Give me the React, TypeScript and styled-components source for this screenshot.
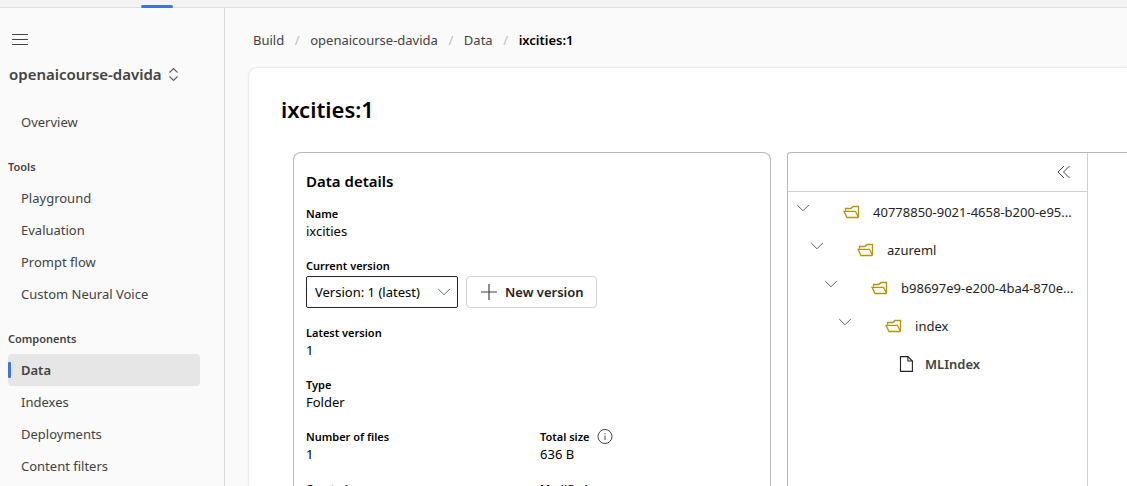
import React from "react";
import styled, { createGlobalStyle } from "styled-components";

const GlobalStyle = createGlobalStyle`
  *, *::before, *::after { box-sizing: border-box; }
  body {
    margin: 0;
    background: #fafafa;
    color: #000;
    font-family: "Noto Sans", "Open Sans", sans-serif;
    font-size: 13px;
    line-height: 20px;
  }
  h1, h2, h3, p, ul, ol, dl, dd { margin: 0; padding: 0; }
  ul, ol { list-style: none; }
  a { color: inherit; text-decoration: none; }
  button, select { font: inherit; color: inherit; }
  svg { display: block; flex: none; fill: none; }
`;

const Shell = styled.div`
  display: flex;
  flex-direction: column;
  height: 100vh;
  overflow: hidden;
`;

const TopBar = styled.header`
  flex: none;
  display: flex;
  align-items: flex-end;
  height: 8px;
  padding-left: 141px;
  background: #f3f3f3;
  border-bottom: 1px solid #e0e0e0;
`;

const TopTab = styled.span`
  width: 32px;
  height: 3px;
  margin-bottom: -1px;
  border-radius: 2px;
  background: #4273d9;
`;

const Body = styled.div`
  flex: 1;
  display: flex;
  min-height: 0;
`;

const Sidebar = styled.nav`
  flex: none;
  width: 225px;
  padding: 22px 24px 0 8px;
  border-right: 1px solid #d9d9d9;
  color: #424242;
  overflow: hidden;
`;

const PlainButton = styled.button`
  display: flex;
  align-items: center;
  padding: 0;
  border: 0;
  background: none;
`;

const MenuButton = styled(PlainButton)`
  height: 20px;
  padding-left: 4px;
`;

const ProjectButton = styled(PlainButton)`
  gap: 7px;
  height: 24px;
  margin: 12px 0 20px;
  padding-left: 1px;
  font-size: 15px;
  font-weight: 600;
`;

const NavHeading = styled.h3`
  padding: 20px 0 7px;
  font-size: 11px;
  font-weight: 600;
  line-height: 17px;
`;

const NavLink = styled.a<{ $active?: boolean }>`
  display: flex;
  align-items: center;
  gap: 10px;
  height: 32px;
  padding-left: ${(p) => (p.$active ? 0 : 13)}px;
  border-radius: 4px;
  background: ${(p) => (p.$active ? "#e6e6e6" : "transparent")};
  font-weight: ${(p) => (p.$active ? 600 : 400)};
  &::before {
    content: "";
    display: ${(p) => (p.$active ? "block" : "none")};
    width: 3px;
    height: 16px;
    border-radius: 1px;
    background: #4273d9;
  }
`;

const Main = styled.main`
  flex: 1;
  min-width: 0;
  display: flex;
  flex-direction: column;
  padding: 22px 0 0 24px;
`;

const Crumbs = styled.ol`
  display: flex;
  padding-left: 4px;
  color: #424242;
`;

const Crumb = styled.li`
  display: flex;
  & + &::before {
    content: "/";
    width: 26px;
    text-align: center;
    color: #bdbdbd;
  }
  [aria-current] { color: #000; font-weight: 600; }
`;

const Page = styled.section`
  flex: 1;
  min-height: 0;
  display: flex;
  flex-direction: column;
  margin-top: 18px;
  padding: 26px 0 0 32px;
  border-top-left-radius: 8px;
  background: #fff;
  box-shadow: 0 0 2px rgba(0, 0, 0, 0.24);
`;

const PageTitle = styled.h1`
  font-size: 22px;
  font-weight: 600;
  line-height: 30px;
`;

const Panels = styled.div`
  flex: 1;
  display: grid;
  grid-template-columns: 45fr 32fr;
  gap: 16px;
  margin-top: 28px;
  padding-left: 12px;
`;

const DetailsCard = styled.section`
  padding: 17px 12px;
  border: 1px solid #b8b8b8;
  border-bottom: 0;
  border-radius: 8px 8px 0 0;
`;

const CardTitle = styled.h2`
  font-size: 15px;
  font-weight: 600;
  line-height: 22px;
  margin-bottom: 14px;
`;

const Fields = styled.div`
  display: grid;
  grid-template-columns: 1fr 1fr;
  gap: 17px 16px;
`;

const Field = styled.div<{ $wide?: boolean }>`
  grid-column: ${(p) => (p.$wide ? "1 / -1" : "auto")};
`;

const FieldLabel = styled.div`
  display: flex;
  align-items: center;
  gap: 8px;
  height: 16px;
  font-size: 11px;
  font-weight: 600;
  line-height: 16px;
`;

const FieldValue = styled.p`
  line-height: 19px;
`;

const Controls = styled.div`
  display: flex;
  gap: 8px;
  padding-top: 2px;
`;

const SelectBox = styled.div`
  display: grid;
  align-items: center;
  width: 152px;
  & > * { grid-area: 1 / 1; }
  svg { justify-self: end; margin-right: 7px; pointer-events: none; }
`;

const Select = styled.select`
  appearance: none;
  width: 100%;
  height: 32px;
  padding: 0 28px 0 8px;
  border: 1px solid #242424;
  border-radius: 2px;
  background: #fff;
`;

const NewButton = styled.button`
  display: flex;
  align-items: center;
  gap: 8px;
  height: 32px;
  padding: 0 12px 0 14px;
  border: 1px solid #d1d1d1;
  border-radius: 4px;
  background: #fff;
  color: #242424;
  font-weight: 600;
`;

const Explorer = styled.section`
  display: flex;
  min-width: 0;
  border: 1px solid #b8b8b8;
  border-width: 1px 0 0 1px;
  border-top-left-radius: 4px;
`;

const TreePane = styled.div`
  width: 300px;
  border-right: 1px solid #d1d1d1;
`;

const TreeHeader = styled.div`
  display: flex;
  align-items: center;
  justify-content: flex-end;
  height: 39px;
  padding-right: 16px;
  border-bottom: 1px solid #d1d1d1;
`;

const TreeRow = styled.li<{ $level: number }>`
  display: flex;
  align-items: center;
  height: 38px;
  padding: 2px 7px 0 ${(p) => 8 + p.$level * 14}px;
  color: #242424;
`;

const Toggle = styled(PlainButton)`
  flex: none;
  width: 47px;
  height: 20px;
  padding-bottom: 8px;
`;

const FileSpacer = styled.span`
  flex: none;
  width: 47px;
`;

const RowText = styled.span<{ $strong?: boolean }>`
  margin-left: 12px;
  white-space: nowrap;
  color: ${(p) => (p.$strong ? "#424242" : "#242424")};
  font-weight: ${(p) => (p.$strong ? 600 : 400)};
`;

const ChevronIcon = ({ color = "#616161" }: { color?: string }) => (
  <svg width="14" height="8" viewBox="0 0 14 8" stroke={color} aria-hidden="true">
    <path d="M1.200 1l5.800 5.800L12.800 1" />
  </svg>
);

const FolderIcon = () => (
  <svg width="18" height="14" viewBox="0 0 18 14" stroke="#b39410" strokeWidth="1.300" aria-hidden="true">
    <path d="M2.500 5.500V3.500H8l2-2h5.500v11L12.500 6.300H1l3 6.200h11.500" />
  </svg>
);

const FileIcon = () => (
  <svg width="14" height="16" viewBox="0 0 14 16" stroke="#242424" strokeWidth="1.100" aria-hidden="true">
    <path d="M1.500.600h7.500l4.400 4.400v10.400H1.500zM8.900.600V5h4.500" />
  </svg>
);

const toolLinks = ["Playground", "Evaluation", "Prompt flow", "Custom Neural Voice"];
const componentLinks = ["Data", "Indexes", "Deployments", "Content filters"];
const folders = [
  "40778850-9021-4658-b200-e95...",
  "azureml",
  "b98697e9-e200-4ba4-870e...",
  "index",
];

const NavItems = ({ items, active }: { items: string[]; active?: string }) => (
  <ul>
    {items.map((name) => (
      <li key={name}>
        <NavLink href="#" $active={name === active}>{name}</NavLink>
      </li>
    ))}
  </ul>
);

export default function App() {
  return (
    <Shell>
      <GlobalStyle />
      <TopBar><TopTab /></TopBar>
      <Body>
        <Sidebar>
          <MenuButton aria-label="Toggle navigation">
            <svg width="16" height="12" viewBox="0 0 16 12" stroke="#424242" aria-hidden="true">
              <path d="M0 .5h16M0 5.5h16M0 10.5h16" />
            </svg>
          </MenuButton>
          <ProjectButton>
            openaicourse-davida
            <svg width="9" height="13" viewBox="0 0 9 13" stroke="#616161" strokeWidth="1.1" aria-hidden="true">
              <path d="M.5 4.5l4-4 4 4M.5 8.5l4 4 4-4" />
            </svg>
          </ProjectButton>
          <NavItems items={["Overview"]} />
          <NavHeading>Tools</NavHeading>
          <NavItems items={toolLinks} />
          <NavHeading>Components</NavHeading>
          <NavItems items={componentLinks} active="Data" />
        </Sidebar>
        <Main>
          <Crumbs aria-label="Breadcrumb">
            <Crumb><a href="#">Build</a></Crumb>
            <Crumb><a href="#">openaicourse-davida</a></Crumb>
            <Crumb><a href="#">Data</a></Crumb>
            <Crumb><span aria-current="page">ixcities:1</span></Crumb>
          </Crumbs>
          <Page>
            <PageTitle>ixcities:1</PageTitle>
            <Panels>
              <DetailsCard>
                <CardTitle>Data details</CardTitle>
                <Fields>
                  <Field $wide>
                    <FieldLabel>Name</FieldLabel>
                    <FieldValue>ixcities</FieldValue>
                  </Field>
                  <Field $wide>
                    <FieldLabel as="label" htmlFor="version">Current version</FieldLabel>
                    <Controls>
                      <SelectBox>
                        <Select id="version" defaultValue="1">
                          <option value="1">Version: 1 (latest)</option>
                        </Select>
                        <ChevronIcon color="#5b6f8f" />
                      </SelectBox>
                      <NewButton>
                        <svg width="16" height="16" viewBox="0 0 16 16" stroke="#424242" strokeWidth="1.2" aria-hidden="true">
                          <path d="M8 0v16M0 8h16" />
                        </svg>
                        New version
                      </NewButton>
                    </Controls>
                  </Field>
                  <Field $wide>
                    <FieldLabel>Latest version</FieldLabel>
                    <FieldValue>1</FieldValue>
                  </Field>
                  <Field $wide>
                    <FieldLabel>Type</FieldLabel>
                    <FieldValue>Folder</FieldValue>
                  </Field>
                  <Field>
                    <FieldLabel>Number of files</FieldLabel>
                    <FieldValue>1</FieldValue>
                  </Field>
                  <Field>
                    <FieldLabel>
                      Total size
                      <svg width="16" height="16" viewBox="0 0 16 16" stroke="#424242" aria-hidden="true">
                        <circle cx="8" cy="7.5" r="7" />
                        <path d="M8 6.500V11M8 4v1.200" />
                      </svg>
                    </FieldLabel>
                    <FieldValue>636 B</FieldValue>
                  </Field>
                  <Field><FieldLabel>Created</FieldLabel></Field>
                  <Field><FieldLabel>Modified</FieldLabel></Field>
                </Fields>
              </DetailsCard>
              <Explorer>
                <TreePane>
                  <TreeHeader>
                    <PlainButton aria-label="Collapse file list">
                      <svg width="14" height="14" viewBox="0 0 14 14" stroke="#424242" aria-hidden="true">
                        <path d="M7 1L1 7l6 6M12.500 1l-6 6 6 6" />
                      </svg>
                    </PlainButton>
                  </TreeHeader>
                  <ul>
                    {folders.map((name, level) => (
                      <TreeRow key={name} $level={level}>
                        <Toggle aria-label={"Collapse " + name}><ChevronIcon /></Toggle>
                        <FolderIcon />
                        <RowText>{name}</RowText>
                      </TreeRow>
                    ))}
                    <TreeRow $level={4}>
                      <FileSpacer />
                      <FileIcon />
                      <RowText $strong>MLIndex</RowText>
                    </TreeRow>
                  </ul>
                </TreePane>
              </Explorer>
            </Panels>
          </Page>
        </Main>
      </Body>
    </Shell>
  );
}
